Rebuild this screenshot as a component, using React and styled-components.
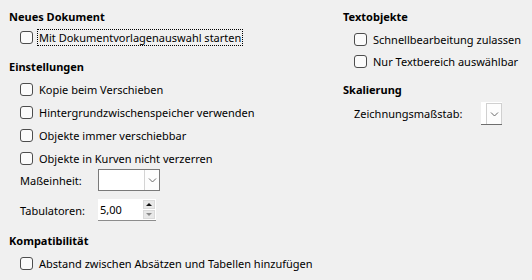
import React from 'react';
import styled, { createGlobalStyle } from 'styled-components';

const GlobalStyle = createGlobalStyle`
  html, body {
    margin: 0;
    padding: 0;
    background: #f0f0f0;
  }
  body {
    font-family: "Noto Sans", "Liberation Sans", sans-serif;
    font-size: 11px;
    color: #000;
  }
`;

const Dialog = styled.div`
  width: 532px;
  height: 280px;
  box-sizing: border-box;
  padding: 8px 0 0 9px;
  display: grid;
  grid-template-columns: 334px 1fr;
  background: #f0f0f0;
`;

const Column = styled.div`
  display: flex;
  flex-direction: column;
`;

const Heading = styled.div`
  font-weight: bold;
  height: 18px;
  line-height: 18px;
  margin-top: ${p => p.$top || 0}px;
`;

const List = styled.div`
  display: flex;
  flex-direction: column;
  padding-left: 11px;
  margin-top: ${p => p.$top || 0}px;
`;

const CheckRow = styled.label`
  display: flex;
  align-items: center;
  gap: 5px;
  height: ${p => p.$h || 23}px;
  white-space: nowrap;
`;

const Box = styled.span`
  width: 11px;
  height: 11px;
  border: 1px solid #4d4d4d;
  border-radius: 3px;
  background: #fbfbfb;
  flex: none;
`;

const Caption = styled.span`
  line-height: 15px;
  padding: 0 1px;
  margin-left: -1px;
  border: 1px dotted ${p => (p.$focus ? '#000' : 'transparent')};
`;

const FieldRow = styled.div`
  display: flex;
  align-items: center;
  height: ${p => p.$h || 24}px;
  margin-top: ${p => p.$top || 0}px;
  white-space: nowrap;
`;

const FieldLabel = styled.span`
  width: ${p => p.$w}px;
  flex: none;
`;

const Combo = styled.div`
  display: flex;
  width: 62px;
  height: 22px;
  box-sizing: border-box;
  border: 1px solid #7a7a7a;
  background: #fff;
  justify-content: flex-end;
`;

const DropButton = styled.div`
  width: 15px;
  height: 20px;
  box-sizing: border-box;
  border-left: 1px solid #d4d4d4;
  background: #fdfdfd;
  display: flex;
  align-items: center;
  justify-content: center;
`;

const NarrowCombo = styled.div`
  display: flex;
  width: 21px;
  height: 23px;
  box-sizing: border-box;
  border-bottom: 1px solid #6e6e6e;
  background: #fff;
  justify-content: flex-end;
  padding-top: 1px;
`;

const NarrowButton = styled(DropButton)`
  width: 16px;
  height: 21px;
  border: 1px solid #d0d0d0;
  border-bottom: none;
`;

const Spin = styled.div`
  display: flex;
  align-items: stretch;
  width: 58px;
  height: 22px;
  box-sizing: border-box;
  border-bottom: 1px solid #8c8c8c;
  background: #fff;
`;

const SpinText = styled.span`
  flex: 1;
  padding-left: 2px;
  line-height: 21px;
`;

const SpinButtons = styled.div`
  display: flex;
  flex-direction: column;
  gap: 1px;
  width: 12px;
  padding: 1px 1px 0 0;
`;

const SpinButton = styled.div`
  height: 9px;
  background: #e8e8e8;
  border: 1px solid #dadada;
  box-sizing: border-box;
  display: flex;
  align-items: center;
  justify-content: center;
  &::after {
    content: '';
    border-left: 3px solid transparent;
    border-right: 3px solid transparent;
    ${p => (p.$down
      ? 'border-top: 3px solid #8a8a8a;'
      : 'border-bottom: 3px solid #111;')}
  }
`;

const Chevron = () => (
  <svg width="9" height="6" viewBox="0 0 9 6">
    <path d="M1 1.5 L4.5 5 L8 1.5" fill="none" stroke="#6a6a6a" strokeWidth="1" />
  </svg>
);

const Check = ({ children, focus, h }) => (
  <CheckRow $h={h}>
    <Box />
    <Caption $focus={focus}>{children}</Caption>
  </CheckRow>
);

export default function App() {
  return (
    <>
      <GlobalStyle />
      <Dialog>
        <Column>
          <Heading>Neues Dokument</Heading>
          <List>
            <Check focus h={22}>Mit Dokumentvorlagenauswahl starten</Check>
          </List>
          <Heading $top={10}>Einstellungen</Heading>
          <List $top={2}>
            <Check>Kopie beim Verschieben</Check>
            <Check>Hintergrundzwischenspeicher verwenden</Check>
            <Check>Objekte immer verschiebbar</Check>
            <Check>Objekte in Kurven nicht verzerren</Check>
            <FieldRow $top={-2}>
              <FieldLabel $w={78}>Maßeinheit:</FieldLabel>
              <Combo>
                <DropButton><Chevron /></DropButton>
              </Combo>
            </FieldRow>
            <FieldRow $top={7} $h={22}>
              <FieldLabel $w={78}>Tabulatoren:</FieldLabel>
              <Spin>
                <SpinText>5,00</SpinText>
                <SpinButtons>
                  <SpinButton />
                  <SpinButton $down />
                </SpinButtons>
              </Spin>
            </FieldRow>
          </List>
          <Heading $top={11}>Kompatibilität</Heading>
          <List $top={2}>
            <Check h={22}>Abstand zwischen Absätzen und Tabellen hinzufügen</Check>
          </List>
        </Column>
        <Column>
          <Heading>Textobjekte</Heading>
          <List $top={2}>
            <Check h={22}>Schnellbearbeitung zulassen</Check>
            <Check h={22}>Nur Textbereich auswählbar</Check>
          </List>
          <Heading $top={9}>Skalierung</Heading>
          <List>
            <FieldRow $top={2} $h={25}>
              <FieldLabel $w={127}>Zeichnungsmaßstab:</FieldLabel>
              <NarrowCombo>
                <NarrowButton><Chevron /></NarrowButton>
              </NarrowCombo>
            </FieldRow>
          </List>
        </Column>
      </Dialog>
    </>
  );
}
